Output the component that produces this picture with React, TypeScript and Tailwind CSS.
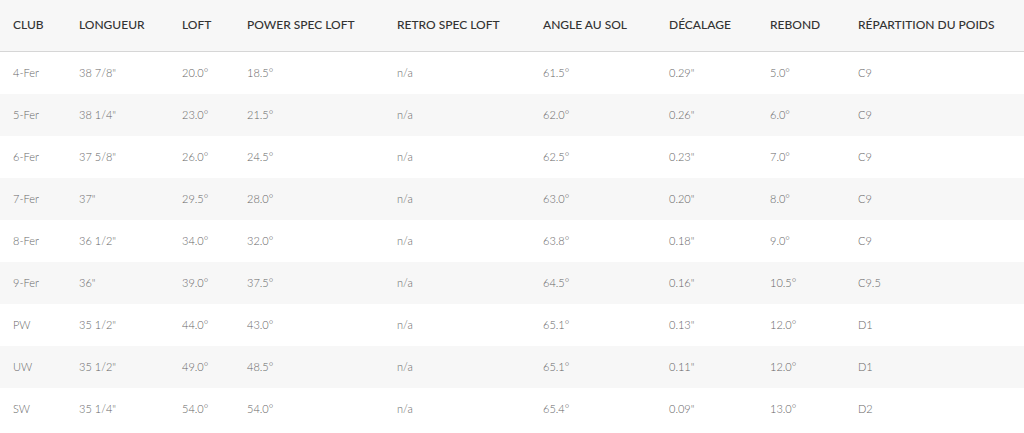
import React from "react";

const cols = [
  { label: "CLUB", w: "w-[66px]" },
  { label: "LONGUEUR", w: "w-[103px]" },
  { label: "LOFT", w: "w-[65px]" },
  { label: "POWER SPEC LOFT", w: "w-[150px]" },
  { label: "RETRO SPEC LOFT", w: "w-[146px]" },
  { label: "ANGLE AU SOL", w: "w-[126px]" },
  { label: "DÉCALAGE", w: "w-[101px]" },
  { label: "REBOND", w: "w-[88px]" },
  { label: "RÉPARTITION DU POIDS", w: "flex-1" },
];

const rows = [
  ["4-Fer", "38 7/8\"", "20.0°", "18.5°", "n/a", "61.5°", "0.29\"", "5.0°", "C9"],
  ["5-Fer", "38 1/4\"", "23.0°", "21.5°", "n/a", "62.0°", "0.26\"", "6.0°", "C9"],
  ["6-Fer", "37 5/8\"", "26.0°", "24.5°", "n/a", "62.5°", "0.23\"", "7.0°", "C9"],
  ["7-Fer", "37\"", "29.5°", "28.0°", "n/a", "63.0°", "0.20\"", "8.0°", "C9"],
  ["8-Fer", "36 1/2\"", "34.0°", "32.0°", "n/a", "63.8°", "0.18\"", "9.0°", "C9"],
  ["9-Fer", "36\"", "39.0°", "37.5°", "n/a", "64.5°", "0.16\"", "10.5°", "C9.5"],
  ["PW", "35 1/2\"", "44.0°", "43.0°", "n/a", "65.1°", "0.13\"", "12.0°", "D1"],
  ["UW", "35 1/2\"", "49.0°", "48.5°", "n/a", "65.1°", "0.11\"", "12.0°", "D1"],
  ["SW", "35 1/4\"", "54.0°", "54.0°", "n/a", "65.4°", "0.09\"", "13.0°", "D2"],
];

export default function App() {
  return (
    <div className="w-[1024px] h-[433px] bg-white overflow-hidden" style={{ fontFamily: "Lato, 'Open Sans', sans-serif" }}>
      <div className="flex h-[52px] items-center bg-[#f7f7f7] border-b border-[#d6d6d6]">
        {cols.map((c) => (
          <div key={c.label} className={`${c.w} shrink-0 pl-[13px] pb-[2px] text-[12px] font-medium text-[#333]`}>
            {c.label}
          </div>
        ))}
      </div>
      {rows.map((r, i) => (
        <div key={r[0]} className={`flex h-[42px] items-center ${i % 2 === 1 ? "bg-[#f7f7f7]" : "bg-white"}`}>
          {r.map((v, j) => (
            <div key={j} className={`${cols[j].w} shrink-0 pl-[13px] text-[11px] font-light text-[#666]`}>
              {v}
            </div>
          ))}
        </div>
      ))}
    </div>
  );
}
